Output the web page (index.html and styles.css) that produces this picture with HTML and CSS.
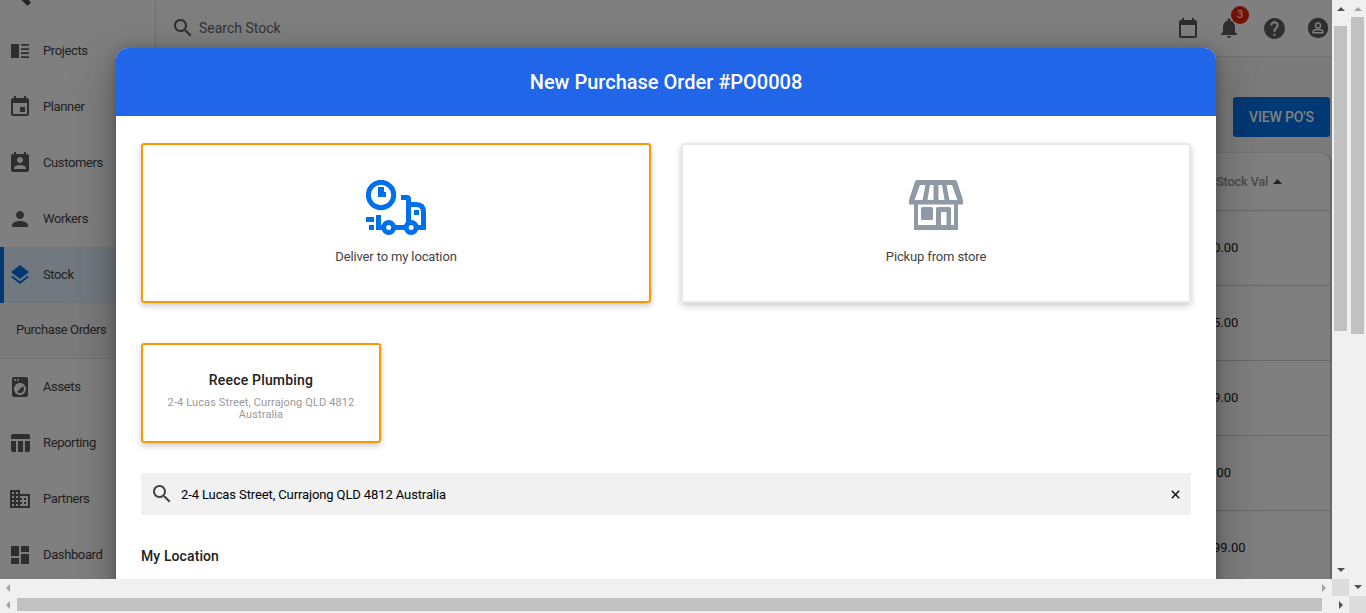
FILE: index.html
```html
<!DOCTYPE html>
<html lang="en">
<head>
<meta charset="utf-8">
<title>New Purchase Order</title>
<link rel="stylesheet" href="styles.css">
</head>
<body>
<div class="frame">
  <div class="app">
    <nav class="sidebar">
      <div class="brand"><svg width="40" height="8" viewBox="0 0 40 8"><path d="M21.5 0L27.500 6L31 2.500L28.500 0z"/></svg></div>
      <a class="item"><svg class="icon" viewBox="0 0 24 24"><path d="M13 15h8v-1.700h-8zm0 4h8v-1.700h-8zm0-8h8V9.300h-8zm0-6v1.700h8V5zM3 5h8v14H3z"/></svg>Projects</a>
      <a class="item"><svg class="icon" viewBox="0 0 24 24"><path d="M17 12h-5v5h5v-5zM16 1v2H8V1H6v2H5c-1.110 0-1.990.9-1.990 2L3 19c0 1.100.89 2 2 2h14c1.100 0 2-.9 2-2V5c0-1.100-.9-2-2-2h-1V1h-2zm3 18H5V8h14v11z"/></svg>Planner</a>
      <a class="item"><svg class="icon" viewBox="0 0 24 24"><path d="M19 3h-1V1h-2v2H8V1H6v2H5c-1.110 0-2 .9-2 2v14c0 1.100.89 2 2 2h14c1.100 0 2-.9 2-2V5c0-1.100-.9-2-2-2zm-7 3c1.660 0 3 1.340 3 3s-1.340 3-3 3-3-1.340-3-3 1.340-3 3-3zm6 12H6v-1c0-2 4-3.100 6-3.100s6 1.100 6 3.100v1z"/></svg>Customers</a>
      <a class="item"><svg class="icon" viewBox="0 0 24 24"><path d="M12 12c2.210 0 4-1.790 4-4s-1.790-4-4-4-4 1.790-4 4 1.790 4 4 4zm0 2c-2.670 0-8 1.340-8 4v2h16v-2c0-2.660-5.330-4-8-4z"/></svg>Workers</a>
      <a class="item active"><svg class="icon" viewBox="0 0 24 24"><path d="M11.990 18.540l-7.370-5.730L3 14.070l9 7 9-7-1.630-1.270-7.380 5.740zM12 16l7.360-5.730L21 9l-9-7-9 7 1.630 1.270L12 16z"/></svg>Stock</a>
      <a class="subitem">Purchase Orders</a>
      <a class="item"><svg class="icon" viewBox="0 0 24 24"><path d="M9.170 16.830c1.560 1.560 4.100 1.560 5.660 0 1.560-1.560 1.560-4.100 0-5.660l-5.660 5.660zM18 2.010L6 2c-1.110 0-2 .89-2 2v16c0 1.110.89 2 2 2h12c1.110 0 2-.89 2-2V4c0-1.110-.89-1.990-2-1.990zM10 4c.55 0 1 .45 1 1s-.45 1-1 1-1-.45-1-1 .45-1 1-1zM7 4c.55 0 1 .45 1 1s-.45 1-1 1-1-.45-1-1 .45-1 1-1zm5 16c-3.310 0-6-2.690-6-6s2.690-6 6-6 6 2.690 6 6-2.690 6-6 6z"/></svg>Assets</a>
      <a class="item"><svg class="icon" viewBox="0 0 24 24"><path d="M10 10.020h5V21h-5V10.020zM17 21h3c1.100 0 2-.9 2-2v-9h-5v11zm3-18H5c-1.100 0-2 .9-2 2v3h19V5c0-1.100-.9-2-2-2zM3 19c0 1.100.9 2 2 2h3V10H3v9z"/></svg>Reporting</a>
      <a class="item"><svg class="icon" viewBox="0 0 24 24"><path d="M12 7V3H2v18h20V7H12zM6 19H4v-2h2v2zm0-4H4v-2h2v2zm0-4H4V9h2v2zm0-4H4V5h2v2zm4 12H8v-2h2v2zm0-4H8v-2h2v2zm0-4H8V9h2v2zm0-4H8V5h2v2zm10 12h-8v-2h2v-2h-2v-2h2v-2h-2V9h8v10zm-2-8h-2v2h2v-2zm0 4h-2v2h2v-2z"/></svg>Partners</a>
      <a class="item"><svg class="icon" viewBox="0 0 24 24"><path d="M3 13h8V3H3v10zm0 8h8v-6H3v6zm10 0h8V11h-8v10zm0-18v6h8V3h-8z"/></svg>Dashboard</a>
    </nav>
    <div class="main">
      <header class="topbar">
        <svg class="icon" viewBox="0 0 24 24"><path d="M15.500 14h-.79l-.28-.27C15.410 12.590 16 11.110 16 9.500 16 5.910 13.090 3 9.500 3S3 5.910 3 9.500 5.910 16 9.500 16c1.610 0 3.090-.59 4.230-1.570l.27.28v.79l5 4.990L20.490 19l-4.990-5zm-6 0C7.010 14 5 11.990 5 9.500S7.010 5 9.500 5 14 7.010 14 9.500 11.990 14 9.500 14z"/></svg>
        <span class="search-label">Search Stock</span>
        <div class="tools">
          <svg class="icon" viewBox="0 0 24 24"><path d="M19 4h-1V2h-2v2H8V2H6v2H5c-1.110 0-2 .9-2 2v14c0 1.100.89 2 2 2h14c1.100 0 2-.9 2-2V6c0-1.100-.9-2-2-2zm0 16H5V9h14v11z"/></svg>
          <div class="bell"><svg class="icon" viewBox="0 0 24 24"><path d="M12 22c1.100 0 2-.9 2-2h-4c0 1.100.89 2 2 2zm6-6v-5c0-3.070-1.640-5.640-4.500-6.320V4c0-.83-.67-1.500-1.500-1.500s-1.500.67-1.500 1.500v.68C7.630 5.360 6 7.920 6 11v5l-2 2v1h16v-1l-2-2z"/></svg><span class="badge">3</span></div>
          <svg class="icon help" viewBox="0 0 24 24"><path d="M12 2C6.480 2 2 6.480 2 12s4.480 10 10 10 10-4.480 10-10S17.520 2 12 2zm1 17h-2v-2h2v2zm2.070-7.750l-.9.920C13.450 12.900 13 13.500 13 15h-2v-.5c0-1.100.45-2.100 1.170-2.830l1.240-1.260c.37-.36.59-.86.59-1.410 0-1.100-.9-2-2-2s-2 .9-2 2H8c0-2.210 1.790-4 4-4s4 1.790 4 4c0 .88-.36 1.680-.93 2.250z"/></svg>
          <svg class="icon" viewBox="0 0 24 24"><circle cx="12" cy="12" r="10.200"/><g class="person"><circle cx="12" cy="9.500" r="2.500"/><path d="M7 16.800v-1c0-1.500 3-2.300 5-2.300s5 .8 5 2.300v1z"/></g></svg>
        </div>
      </header>
      <section class="content">
        <button class="view-btn">VIEW PO'S</button>
        <div class="table">
          <div class="thead">Stock Val <svg width="9" height="5" viewBox="0 0 9 5"><path d="M0 5L4.500 0L9 5z"/></svg></div>
          <div class="row">0.00</div>
          <div class="row">5.00</div>
          <div class="row">9.00</div>
          <div class="row">.00</div>
          <div class="row">99.00</div>
        </div>
      </section>
    </div>
    <div class="overlay">
      <div class="modal">
        <h1 class="modal-title">New Purchase Order #PO0008</h1>
        <div class="modal-body">
          <div class="options">
            <div class="card option selected">
              <svg class="truck" width="60" height="55" viewBox="0 0 60 55">
                <circle cx="15" cy="15" r="12.700"/>
                <path d="M35 17.500H41Q42.500 17.500 42.500 19V47.500M42.500 24.500H50Q57.500 24.500 57.500 32V47.500H52M29 47.500H39M12.500 35V47.500H17"/>
                <circle cx="22.700" cy="47.500" r="5"/><circle cx="45.200" cy="47.500" r="5" class="hub"/>
                <path class="solid" d="M12 7h6v5h2v5h-8zM48 30h5v5h-5zM0 37h8v5H0zM3 45h5v5H3z"/>
              </svg>
              <span>Deliver to my location</span>
            </div>
            <div class="card option">
              <svg class="store" width="54" height="50" viewBox="0 0 54 50"><path fill-rule="evenodd" d="M8 0H46Q47.500 0 48 1.500L54 20V24.500H49V50H5V24.500H0V20L6 1.500Q6.500 0 8 0zM11 5L5.500 20H13.500L16.500 5zM21 5L18.500 20H24.500V5zM29.500 5V20H35.500L33 5zM37.500 5L40.500 20H48.500L43 5zM9 24.500V45H27V28.500Q27 27 28.500 27H40.500Q42 27 42 28.500V45H45V24.500zM32 32V45H37.500V32z"/><rect x="12" y="27" width="12" height="13" rx="1.500"/></svg>
              <span>Pickup from store</span>
            </div>
          </div>
          <div class="card supplier selected">
            <strong>Reece Plumbing</strong>
            <small>2-4 Lucas Street, Currajong QLD 4812 Australia</small>
          </div>
          <div class="address">
            <svg class="icon" viewBox="0 0 24 24"><path d="M15.500 14h-.79l-.28-.27C15.410 12.590 16 11.110 16 9.500 16 5.910 13.090 3 9.500 3S3 5.910 3 9.500 5.910 16 9.500 16c1.610 0 3.090-.59 4.230-1.570l.27.28v.79l5 4.990L20.490 19l-4.990-5zm-6 0C7.010 14 5 11.990 5 9.500S7.010 5 9.500 5 14 7.010 14 9.500 11.990 14 9.500 14z"/></svg>
            <span class="address-text">2-4 Lucas Street, Currajong QLD 4812 Australia</span>
            <svg class="clear" width="9" height="9" viewBox="0 0 9 9"><path d="M.8.8L8.200 8.200M8.200.8L.8 8.200"/></svg>
          </div>
          <h2 class="location">My Location</h2>
        </div>
      </div>
    </div>
  </div>
  <div class="bar vert inner"><svg class="arrow" viewBox="0 0 8 4"><path d="M0 4L4 0L8 4z"/></svg><i class="thumb"></i><svg class="arrow end" viewBox="0 0 8 4"><path d="M0 0L4 4L8 0z"/></svg></div>
  <div class="bar vert outer"><svg class="arrow dim" viewBox="0 0 8 4"><path d="M0 4L4 0L8 4z"/></svg><i class="thumb"></i><svg class="arrow end" viewBox="0 0 8 4"><path d="M0 0L4 4L8 0z"/></svg></div>
  <div class="bar horiz inner"><svg class="arrow dim" viewBox="0 0 4 8"><path d="M4 0L0 4L4 8z"/></svg><svg class="arrow end dim" viewBox="0 0 4 8"><path d="M0 0L4 4L0 8z"/></svg></div>
  <div class="corner"></div>
  <div class="bar horiz outer"><svg class="arrow dim" viewBox="0 0 4 8"><path d="M4 0L0 4L4 8z"/></svg><i class="thumb"></i><svg class="arrow end" viewBox="0 0 4 8"><path d="M0 0L4 4L0 8z"/></svg></div>
  <div class="corner"></div>
</div>
</body>
</html>
```
FILE: styles.css
```css
* { box-sizing: border-box; }
body { margin: 0; overflow: hidden; font: 13px/1.2 Roboto, "Liberation Sans", sans-serif; color: #444; }
.frame { display: grid; width: 1366px; height: 613px; grid-template-columns: 1332px 17px 17px; grid-template-rows: 579px 17px 17px; }
.app { position: relative; display: flex; overflow: hidden; background: #fff; }
.icon { width: 24px; height: 24px; flex: none; fill: #5c5c5c; display: block; }

/* Sidebar */
.sidebar { width: 156px; flex: none; border-right: 1px solid #e0e0e0; letter-spacing: -.38px; }
.brand { height: 23px; }
.brand svg { display: block; fill: #4a4a4a; }
.item { display: flex; align-items: center; gap: 11px; height: 56px; padding-left: 8px; }
.active { background: #e3f0ff; border-left: 4px solid #0073e6; padding-left: 4px; }
.active .icon { fill: #0073e6; }
.subitem { display: flex; align-items: center; height: 56px; padding: 0 0 1px 16px; background: #f7f7f7; border-bottom: 1px solid #e0e0e0; }

/* Page behind the dialog */
.main { flex: 1; display: flex; flex-direction: column; }
.topbar { display: flex; flex: none; align-items: center; height: 57px; padding: 0 2px 0 15px; border-bottom: 1px solid #e0e0e0; }
.search-label { margin-left: 4px; font-size: 14px; color: #666; }
.tools { display: flex; align-items: center; margin-left: auto; gap: 20px; }
.tools .bell { position: relative; margin: 0 1px 0 -3px; }
.tools .help { width: 25px; height: 25px; margin-right: -1px; }
.person { fill: none; stroke: #fff; stroke-width: 1.400; }
.badge { position: absolute; left: 14px; top: -10px; width: 18px; height: 18px; border-radius: 50%; background: #e8200a; color: #fff; font-size: 11px; line-height: 18px; text-align: center; }
.content { flex: 1; display: flex; flex-direction: column; align-items: flex-end; padding: 40px 2px 0 0; background: #f7f7f7; }
.view-btn { width: 97px; height: 40px; flex: none; border: 0; border-radius: 3px; padding: 0; background: #0073e6; color: #fff; font: 500 14px Roboto, sans-serif; letter-spacing: -.15px; }
.table { width: 1150px; height: 480px; flex: none; margin: 15px -2px 0 0; background: #fff; border-right: 2px solid #ccc; border-top: 1px solid #e6e6e6; border-radius: 10px 10px 0 0; }
.thead { display: flex; align-items: center; gap: 5px; height: 58px; padding-left: 1034px; color: #999; font-weight: 500; letter-spacing: -.3px; border-bottom: 1px solid #d0d0d0; }
.thead svg { fill: #444; }
.row { display: flex; align-items: center; height: 75px; padding-left: 1031px; border-bottom: 1px solid #d0d0d0; color: #222; }

/* Dialog */
.overlay { position: absolute; inset: 0; padding: 48px 116px 0; background: rgba(0,0,0,.5); overflow: hidden; }
.modal { height: 700px; border-radius: 12px; background: #fff; overflow: hidden; box-shadow: 0 11px 15px -7px rgba(0,0,0,.2), 0 24px 38px 3px rgba(0,0,0,.14), 0 9px 46px 8px rgba(0,0,0,.12), 0 0 12px rgba(0,0,0,.2); }
.modal-title { display: flex; align-items: center; justify-content: center; height: 68px; margin: 0; background: #2166e8; color: #fff; font-size: 20px; font-weight: 500; }
.modal-body { padding: 27px 25px; }
.options { display: grid; grid-template-columns: 1fr 1fr; gap: 30px; }
.card { display: flex; flex-direction: column; align-items: center; border: 2px solid #e8e8e8; border-radius: 3px; box-shadow: 0 3px 6px rgba(0,0,0,.2); }
.card.selected { border-color: #ff9800; }
.option { height: 160px; padding-top: 35px; letter-spacing: -.14px; }
.option span { margin-top: 14px; }
.truck { fill: none; stroke: #0070ea; stroke-width: 5; }
.truck .solid { fill: #0070ea; stroke: none; }
.truck .hub { fill: #fff; }
.store { fill: #9199a6; margin-bottom: 5px; }
.supplier { width: 240px; height: 100px; margin-top: 40px; padding: 26px 20px 0; text-align: center; }
.supplier strong { font-size: 14px; line-height: 18px; font-weight: 500; color: #212121; letter-spacing: .18px; }
.supplier small { margin-top: 8px; font-size: 11px; line-height: 12px; color: #999; letter-spacing: .12px; }
.address { display: flex; align-items: center; height: 42px; margin-top: 30px; padding: 0 11px 0 9px; background: #f1f1f1; color: #000; }
.address .icon { fill: #444; }
.address-text { margin-left: 7px; padding-top: 2px; letter-spacing: -.11px; }
.clear { margin-left: auto; stroke: #111; stroke-width: 1.500; }
.location { margin: 32px 0 0; font-size: 14px; font-weight: 500; line-height: 18px; color: #212121; letter-spacing: .1px; }

/* Scrollbars */
.bar { display: flex; align-items: center; background: #f0f0f0; }
.vert { flex-direction: column; padding: 7px 0; }
.horiz { padding: 0 6px; }
.arrow { flex: none; width: 8px; height: 4px; fill: #505050; }
.horiz .arrow { width: 4px; height: 8px; }
.arrow.dim { fill: #a3a3a3; }
.vert .end { margin-top: auto; }
.horiz .end { margin-left: auto; }
.thumb { flex: none; background: #c1c1c1; }
.vert .thumb { width: 13px; height: 305px; margin-top: 15px; }
.outer.vert { grid-row: 1 / 3; grid-column: 3; }
.outer.vert .thumb { height: 317px; margin-top: 6px; }
.horiz.inner { grid-column: 1; grid-row: 2; }
.horiz.outer { grid-column: 1 / 3; grid-row: 3; }
.horiz .thumb { width: 1305px; height: 13px; margin-left: 7px; }
.corner { background: #dcdcdc; }
```
